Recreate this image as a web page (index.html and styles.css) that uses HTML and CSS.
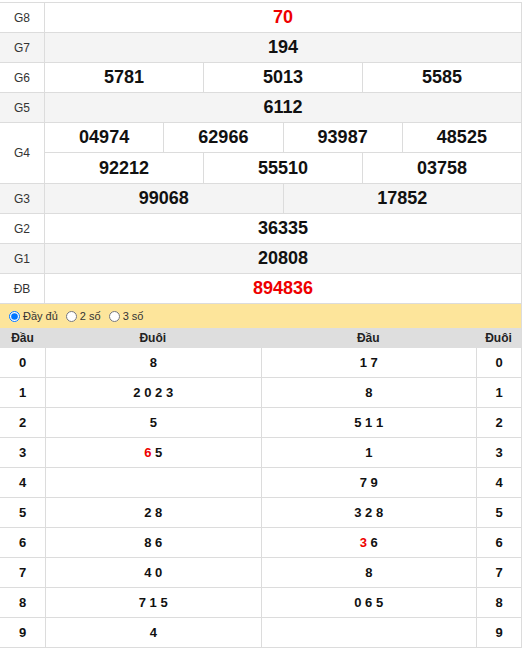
FILE: index.html
```html
<!DOCTYPE html>
<html lang="vi">
<head>
<meta charset="utf-8">
<title>KQXS</title>
<link rel="stylesheet" href="styles.css">
</head>
<body>
<div class="wrap">
  <div class="prize">
    <div class="lbl">G8</div>
    <div class="vals"><div class="line"><div class="num red">70</div></div></div>
  </div>
  <div class="prize alt">
    <div class="lbl">G7</div>
    <div class="vals"><div class="line"><div class="num">194</div></div></div>
  </div>
  <div class="prize">
    <div class="lbl">G6</div>
    <div class="vals"><div class="line"><div class="num">5781</div><div class="num">5013</div><div class="num">5585</div></div></div>
  </div>
  <div class="prize alt">
    <div class="lbl">G5</div>
    <div class="vals"><div class="line"><div class="num">6112</div></div></div>
  </div>
  <div class="prize">
    <div class="lbl">G4</div>
    <div class="vals">
      <div class="line"><div class="num">04974</div><div class="num">62966</div><div class="num">93987</div><div class="num">48525</div></div>
      <div class="line"><div class="num">92212</div><div class="num">55510</div><div class="num">03758</div></div>
    </div>
  </div>
  <div class="prize alt">
    <div class="lbl">G3</div>
    <div class="vals"><div class="line"><div class="num">99068</div><div class="num">17852</div></div></div>
  </div>
  <div class="prize">
    <div class="lbl">G2</div>
    <div class="vals"><div class="line"><div class="num">36335</div></div></div>
  </div>
  <div class="prize alt">
    <div class="lbl">G1</div>
    <div class="vals"><div class="line"><div class="num">20808</div></div></div>
  </div>
  <div class="prize">
    <div class="lbl">ĐB</div>
    <div class="vals"><div class="line"><div class="num red">894836</div></div></div>
  </div>

  <div class="opts">
    <label class="opt"><input type="radio" name="m" checked> Đầy đủ</label>
    <label class="opt"><input type="radio" name="m"> 2 số</label>
    <label class="opt"><input type="radio" name="m"> 3 số</label>
  </div>

  <div class="loto">
    <div class="lrow head">
      <div class="c k">Đầu</div><div class="c v">Đuôi</div><div class="c v">Đầu</div><div class="c k">Đuôi</div>
    </div>
    <div class="lrow"><div class="c k">0</div><div class="c v">8</div><div class="c v">1 7</div><div class="c k">0</div></div>
    <div class="lrow"><div class="c k">1</div><div class="c v">2 0 2 3</div><div class="c v">8</div><div class="c k">1</div></div>
    <div class="lrow"><div class="c k">2</div><div class="c v">5</div><div class="c v">5 1 1</div><div class="c k">2</div></div>
    <div class="lrow"><div class="c k">3</div><div class="c v"><span class="red">6</span> 5</div><div class="c v">1</div><div class="c k">3</div></div>
    <div class="lrow"><div class="c k">4</div><div class="c v"></div><div class="c v">7 9</div><div class="c k">4</div></div>
    <div class="lrow"><div class="c k">5</div><div class="c v">2 8</div><div class="c v">3 2 8</div><div class="c k">5</div></div>
    <div class="lrow"><div class="c k">6</div><div class="c v">8 6</div><div class="c v"><span class="red">3</span> 6</div><div class="c k">6</div></div>
    <div class="lrow"><div class="c k">7</div><div class="c v">4 0</div><div class="c v">8</div><div class="c k">7</div></div>
    <div class="lrow"><div class="c k">8</div><div class="c v">7 1 5</div><div class="c v">0 6 5</div><div class="c k">8</div></div>
    <div class="lrow"><div class="c k">9</div><div class="c v">4</div><div class="c v"></div><div class="c k">9</div></div>
  </div>
</div>
</body>
</html>
```

FILE: styles.css
```css
* { box-sizing: border-box; }
html, body { margin: 0; padding: 0; background: #fff; }
body { font-family: Arial, "Liberation Sans", sans-serif; color: #111; }

.wrap {
  width: 523px;
  margin: 2px 0 0 -1px;
  border-top: 1px solid #dcdcdc;
  border-left: 1px solid #dcdcdc;
  border-right: 1px solid #dcdcdc;
}

.prize {
  display: flex;
  border-bottom: 1px solid #dcdcdc;
}
.prize.alt { background: #f4f4f4; }

.lbl {
  width: 45px;
  flex: none;
  border-right: 1px solid #dcdcdc;
  display: flex;
  align-items: center;
  justify-content: center;
  font-size: 12px;
  color: #333;
}

.vals { flex: 1; display: flex; flex-direction: column; }
.line { display: flex; height: 29px; }
.line + .line { border-top: 1px solid #dcdcdc; height: 31px; }

.num {
  flex: 1 1 0;
  display: flex;
  align-items: center;
  justify-content: center;
  font-size: 18px;
  font-weight: bold;
  color: #111;
}
.num + .num { border-left: 1px solid #dcdcdc; }

.red { color: #e00; }

.opts {
  height: 24px;
  background: #fde59b;
  display: flex;
  align-items: center;
  padding-left: 9px;
  gap: 8px;
  font-size: 11px;
  color: #333;
}
.opt { display: flex; align-items: center; }
.opt input {
  width: 11px;
  height: 11px;
  margin: 0 3px 0 0;
}

.loto { display: flex; flex-direction: column; }
.lrow {
  display: flex;
  height: 30px;
  border-bottom: 1px solid #dcdcdc;
}
.lrow.head {
  height: 20px;
  background: #dedede;
  border-bottom: none;
}
.c {
  display: flex;
  align-items: center;
  justify-content: center;
  font-size: 13px;
  font-weight: bold;
  color: #111;
  white-space: pre;
}
.head .c { font-size: 12px; color: #222; }
.c.k { width: 45px; flex: none; }
.c.v { flex: 1 1 0; }
.lrow:not(.head) .c + .c { border-left: 1px solid #dcdcdc; }
```
